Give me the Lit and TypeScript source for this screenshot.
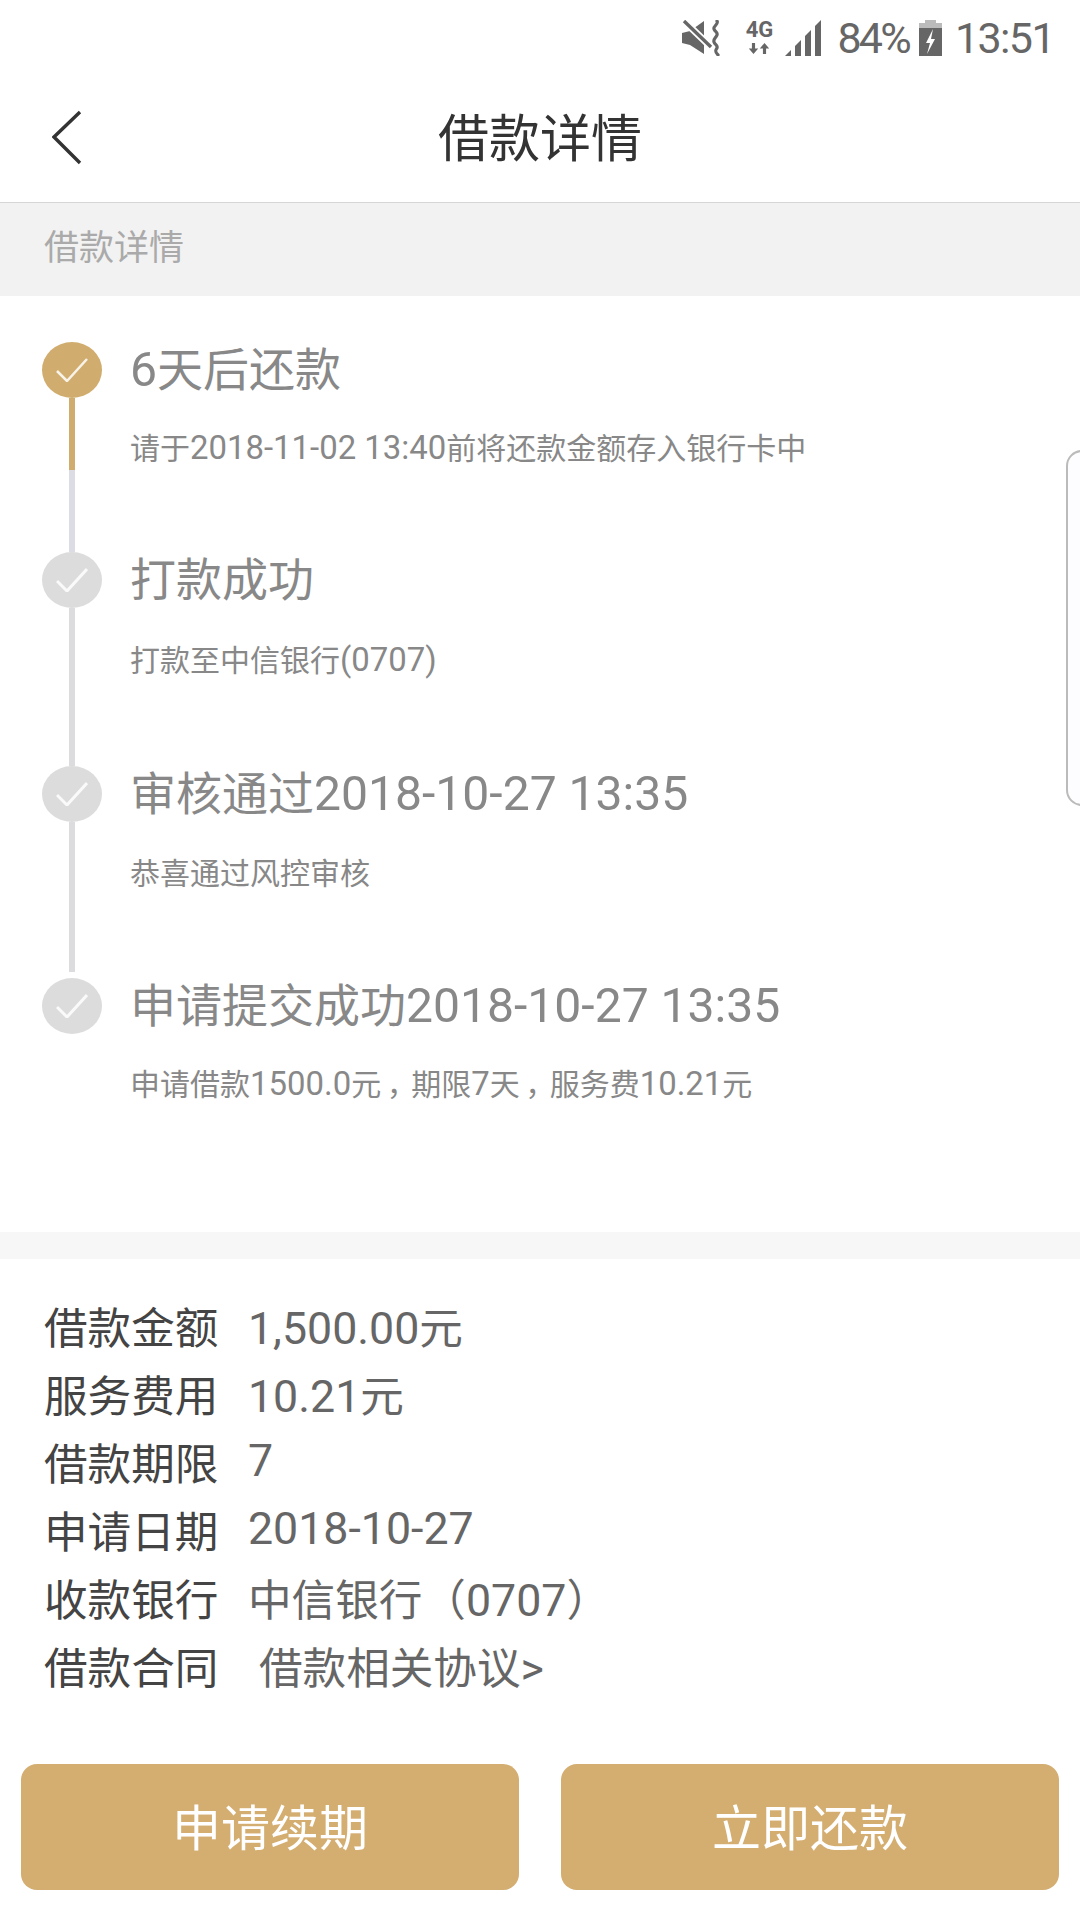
import { LitElement, html, css, svg } from 'lit';
import { customElement } from 'lit/decorators.js';

interface Step {
  title: string;
  sub: string;
  height: number;
  subGap: number;
  active?: boolean;
  last?: boolean;
}

const STEPS: Step[] = [
  { title: '6天后还款', sub: '请于2018-11-02 13:40前将还款金额存入银行卡中', height: 210, subGap: 31, active: true },
  { title: '打款成功', sub: '打款至中信银行(0707)', height: 214, subGap: 33 },
  { title: '审核通过2018-10-27 13:35', sub: '恭喜通过风控审核', height: 212, subGap: 32 },
  { title: '申请提交成功2018-10-27 13:35', sub: '申请借款1500.0元，期限7天，服务费10.21元', height: 254, subGap: 31, last: true },
];

const DETAILS: { label: string; value: string; link?: boolean }[] = [
  { label: '借款金额', value: '1,500.00元' },
  { label: '服务费用', value: '10.21元' },
  { label: '借款期限', value: '7' },
  { label: '申请日期', value: '2018-10-27' },
  { label: '收款银行', value: '中信银行（0707）' },
  { label: '借款合同', value: '借款相关协议>', link: true },
];

// the phone's latin glyphs run larger than its CJK ones, so latin runs get their own span.
// its fullwidth comma also sits mid-cell instead of hard left
function mixed(text: string) {
  return text.split(/([0-9A-Za-z.,:\-() >]+|，)/).map((part, i) => {
    if (part === '，') return html`<span class="comma">${part}</span>`;
    return i % 2 ? html`<span class="en">${part}</span>` : part;
  });
}

const muteIcon = svg`
  <path fill="#666" d="M0 13 L8 11 L22 1 L22 34 L8 25 L0 23 Z" />
  <path fill="none" stroke="#fff" stroke-width="7" d="M2 1 L30 28" />
  <path fill="none" stroke="#666" stroke-width="3.4" d="M2 1 L29 27" />
  <path fill="none" stroke="#666" stroke-width="3.2" stroke-linecap="round"
    d="M35 1 C37 4 31 6 32 9 C33 12 36 12 35 15 C34 18 31 19 32 22 C33 25 36 25 35 28 C34 30 32 31 36 35" />`;

const signalIcon = svg`
  <polygon fill="#666" points="0,36 6,30 6,36" />
  <polygon fill="#666" points="10,36 10,26 16,20 16,36" />
  <polygon fill="#666" points="20,36 20,16 26,10 26,36" />
  <polygon fill="#666" points="30,36 30,6 36,0 36,36" />`;

const batteryIcon = svg`
  <rect fill="#bbb" x="6" y="0" width="11" height="4" />
  <rect fill="#bbb" x="0" y="3" width="23" height="5" />
  <rect fill="#666" x="0" y="8" width="23" height="28" />
  <polygon fill="#fff" points="14,9 7,23 11,23 8,34 16,19 12,19" />`;

@customElement('app-root')
export class AppRoot extends LitElement {
  static override styles = css`
    :host {
      display: block;
      position: relative;
      width: 1080px;
      height: 1920px;
      overflow: hidden;
      background: #fff;
      font-family: Roboto, 'Noto Sans CJK SC', sans-serif;
    }

    .en { line-height: 1; }
    .comma {
      display: inline-block;
      width: 30px;
      text-align: center;
      font-feature-settings: "palt";
    }

    .status {
      height: 80px;
      box-sizing: border-box;
      display: flex;
      align-items: center;
      padding: 0 26px 5px 0;
      justify-content: flex-end;
      color: #666;
    }
    .status svg { display: block; }
    .net {
      display: flex;
      flex-direction: column;
      align-items: center;
      width: 28px;
      margin: 0 12px 0 25px;
    }
    .net span {
      font-size: 22px;
      line-height: 20px;
      font-weight: 700;
    }
    .net svg { margin-top: 2px; }
    .pct {
      font-size: 43px;
      line-height: 46px;
      letter-spacing: -2.8px;
      margin: 0 10px 0 15px;
    }
    .time {
      font-size: 43px;
      line-height: 46px;
      letter-spacing: -1.6px;
      margin-left: 13px;
    }

    .nav {
      height: 123px;
      box-sizing: border-box;
      display: grid;
      grid-template-columns: 1fr auto 1fr;
      align-items: center;
      padding: 0 52px;
      border-bottom: 1px solid #d6d6d6;
    }
    .nav h1 {
      margin: 0 0 2px;
      font-size: 51px;
      line-height: 60px;
      font-weight: 400;
      color: #333;
    }
    .nav svg {
      display: block;
      margin-bottom: 6px;
    }

    .band {
      height: 93px;
      box-sizing: border-box;
      padding: 0 0 11px 44px;
      display: flex;
      align-items: center;
      background: #f2f2f2;
      font-size: 35px;
      color: #aaa;
    }

    .timeline {
      height: 936px;
      box-sizing: border-box;
      padding: 46px 0 0 42px;
    }
    .step {
      display: flex;
      gap: 28px;
      box-sizing: border-box;
    }
    .rail {
      width: 60px;
      display: flex;
      flex-direction: column;
      align-items: center;
    }
    .dot {
      width: 60px;
      height: 56px;
      flex: none;
      border-radius: 50%;
      background: #dcdcdc;
      display: flex;
      align-items: center;
      justify-content: center;
    }
    .line {
      flex: 1;
      width: 6px;
      background: #dcdcde;
    }
    .step.active .dot { background: #d0ad6e; }
    .step.active .line {
      background: linear-gradient(#d0ad6e 72px, #dcdce4 72px);
    }
    .step.short .line { margin-bottom: 6px; }
    .title {
      font-size: 46px;
      line-height: 56px;
      color: #888;
    }
    .title .en { font-size: 1.045em; }
    .sub {
      font-size: 30px;
      line-height: 40px;
      color: #888;
    }
    .sub .en { font-size: 1.097em; }

    .gap {
      height: 27px;
      background: #f7f7f7;
    }

    .details {
      padding: 32px 0 0 44px;
    }
    .row {
      height: 68px;
      display: flex;
      align-items: center;
      font-size: 43.6px;
    }
    .label {
      width: 204px;
      color: #444;
      flex: none;
    }
    .value { color: #666; }
    .value .en { font-size: 1.025em; }
    .value.link { margin-left: 11px; }

    .actions {
      display: flex;
      justify-content: space-between;
      padding: 65px 21px 0;
    }
    .btn {
      width: 498px;
      height: 126px;
      box-sizing: border-box;
      padding-bottom: 6px;
      border-radius: 16px;
      background: #d4ad70;
      color: #fff;
      font-size: 49px;
      display: flex;
      align-items: center;
      justify-content: center;
    }

    .handle {
      position: absolute;
      left: 1066px;
      top: 450px;
      width: 40px;
      height: 356px;
      box-sizing: border-box;
      border: 2px solid #bbb;
      border-radius: 16px;
      background: #fdfdff;
    }
  `;

  private renderStep(step: Step, idx: number) {
    const cls = `step${step.active ? ' active' : ''}${idx === 2 ? ' short' : ''}`;
    const stroke = step.active ? 2.5 : 3;
    return html`
      <div class=${cls} style="height: ${step.height}px">
        <div class="rail">
          <div class="dot">
            <svg width="32" height="24" viewBox="0 0 32 24">
              <polyline points="1,13 11,23 31,1" fill="none" stroke="#fff" stroke-opacity="0.85" stroke-width=${stroke} />
            </svg>
          </div>
          ${step.last ? '' : html`<div class="line"></div>`}
        </div>
        <div>
          <div class="title">${mixed(step.title)}</div>
          <div class="sub" style="margin-top: ${step.subGap}px">${mixed(step.sub)}</div>
        </div>
      </div>
    `;
  }

  override render() {
    return html`
      <div class="status">
        <svg width="38" height="36" viewBox="0 0 38 36">${muteIcon}</svg>
        <div class="net">
          <span>4G</span>
          <svg width="22" height="13" viewBox="0 0 28 14">
            <path fill="#666" d="M5 0 H9 V7 H13 L7 14 L1 7 H5 Z M19 14 H23 V7 H27 L21 0 L15 7 H19 Z" />
          </svg>
        </div>
        <svg width="37" height="36" viewBox="0 0 37 36">${signalIcon}</svg>
        <span class="pct">84%</span>
        <svg width="23" height="36" viewBox="0 0 23 36">${batteryIcon}</svg>
        <span class="time">13:51</span>
      </div>

      <div class="nav">
        <svg width="30" height="56" viewBox="0 0 30 56">
          <polyline points="28,2 2,27 28,53" fill="none" stroke="#333" stroke-width="3.4" />
        </svg>
        <h1>借款详情</h1>
      </div>

      <div class="band">借款详情</div>

      <div class="timeline">
        ${STEPS.map((s, i) => this.renderStep(s, i))}
      </div>

      <div class="gap"></div>

      <div class="details">
        ${DETAILS.map(d => html`
          <div class="row">
            <span class="label">${d.label}</span>
            <span class="value ${d.link ? 'link' : ''}">${mixed(d.value)}</span>
          </div>
        `)}
      </div>

      <div class="actions">
        <div class="btn">申请续期</div>
        <div class="btn">立即还款</div>
      </div>

      <div class="handle"></div>
    `;
  }
}
